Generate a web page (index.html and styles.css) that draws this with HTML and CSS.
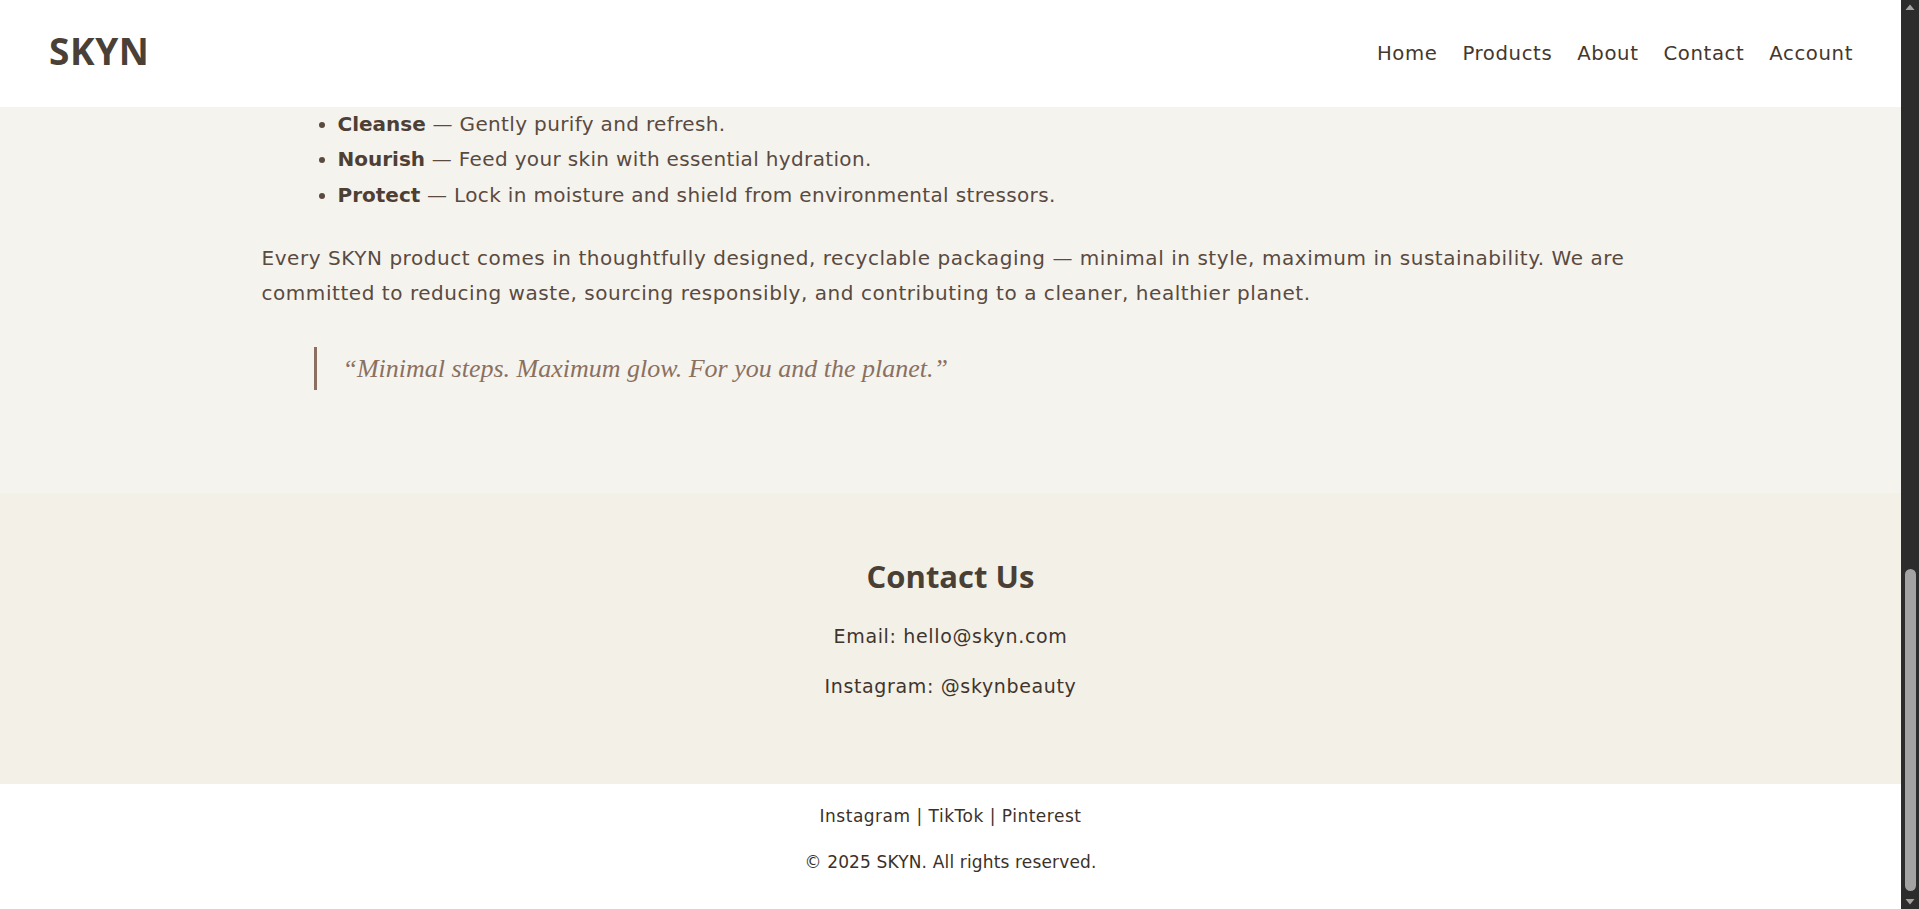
FILE: index.html
```html
<!DOCTYPE html>
<html lang="en">
<head>
<meta charset="utf-8">
<title>SKYN — Minimal Skincare</title>
<link rel="stylesheet" href="styles.css">
</head>
<body>
<div class="page">
  <header class="site-header">
    <div class="logo">SKYN</div>
    <nav class="nav">
      <a href="#home">Home</a>
      <a href="#products">Products</a>
      <a href="#about">About</a>
      <a href="#contact">Contact</a>
      <a href="#account">Account</a>
    </nav>
  </header>

  <main>
    <section class="about" id="about">
      <div class="container">
        <ul class="steps">
          <li><strong>Cleanse</strong> — Gently purify and refresh.</li>
          <li><strong>Nourish</strong> — Feed your skin with essential hydration.</li>
          <li><strong>Protect</strong> — Lock in moisture and shield from environmental stressors.</li>
        </ul>
        <p class="text">Every SKYN product comes in thoughtfully designed, recyclable packaging — minimal in style, maximum in sustainability. We are committed to reducing waste, sourcing responsibly, and contributing to a cleaner, healthier planet.</p>
        <blockquote class="quote">“Minimal steps. Maximum glow. For you and the planet.”</blockquote>
      </div>
    </section>

    <section class="contact" id="contact">
      <h2 class="contact-title">Contact Us</h2>
      <p class="contact-line">Email: hello@skyn.com</p>
      <p class="contact-line">Instagram: @skynbeauty</p>
    </section>
  </main>

  <footer class="site-footer">
    <p class="footer-line footer-links">Instagram | TikTok | Pinterest</p>
    <p class="footer-line">© 2025 SKYN. All rights reserved.</p>
  </footer>
</div>

<div class="scrollbar" aria-hidden="true">
  <svg class="sb-arrow" width="18" height="14" viewBox="0 0 18 14"><polygon points="4.5,10 13.5,10 9,4.5" fill="#a3a3a3"/></svg>
  <div class="sb-track">
    <div class="sb-thumb"></div>
  </div>
  <svg class="sb-arrow" width="18" height="14" viewBox="0 0 18 14"><polygon points="4.5,4 13.5,4 9,9.5" fill="#a3a3a3"/></svg>
</div>
</body>
</html>
```
FILE: styles.css
```css
html, body {
  margin: 0;
  height: 909px;
  overflow: hidden;
}

body {
  background: #ffffff;
  color: #5a4a40;
  font-family: "DejaVu Sans", "Noto Sans", sans-serif;
}

.page {
  margin-right: 18px;
  display: flex;
  flex-direction: column;
}

/* Header */
.site-header {
  height: 107px;
  box-sizing: border-box;
  padding: 0 48px 0 49px;
  display: flex;
  align-items: center;
  justify-content: space-between;
  background: #ffffff;
}

.logo {
  font-family: "Open Sans", sans-serif;
  font-weight: 700;
  font-size: 37px;
  letter-spacing: 0.6px;
  line-height: 1;
  margin-bottom: 6px;
  color: #4a4036;
}

.nav {
  display: flex;
  gap: 25px;
}

.nav a {
  font-size: 19.7px;
  letter-spacing: 0.6px;
  color: #45372d;
  text-decoration: none;
}

/* About (lower part of the section) */
.about {
  background: #f5f3ee;
  height: 386px;
  box-sizing: border-box;
}

.container {
  max-width: 1378px;
  margin: 0 auto;
}

.steps {
  margin: 0 0 27.5px;
  padding-left: 76px;
  font-size: 20px;
  line-height: 35.4px;
  letter-spacing: 0.35px;
}

.steps strong {
  color: #4e3f35;
  letter-spacing: 0;
}

.text {
  margin: 0 0 35px;
  font-size: 20px;
  line-height: 35.6px;
  letter-spacing: 0.55px;
}

.quote {
  margin: 0 0 0 52px;
  padding-left: 26px;
  border-left: 3px solid #8a7060;
  font-family: "Liberation Serif", serif;
  font-style: italic;
  font-size: 26px;
  line-height: 43.4px;
  color: #8a7060;
}

/* Contact */
.contact {
  background: #f3f0e8;
  height: 291px;
  box-sizing: border-box;
  padding-top: 65px;
  text-align: center;
}

.contact-title {
  margin: 0 0 25.6px;
  font-family: "Open Sans", sans-serif;
  font-weight: 700;
  font-size: 31px;
  line-height: 37.2px;
  color: #4a3f35;
}

.contact-line {
  margin: 0;
  font-size: 19px;
  line-height: 30.4px;
  letter-spacing: 0.65px;
  color: #3f352d;
}

.contact-line + .contact-line {
  margin-top: 19.6px;
}

/* Footer */
.site-footer {
  height: 125px;
  box-sizing: border-box;
  background: #ffffff;
  padding-top: 19px;
  display: flex;
  flex-direction: column;
  align-items: center;
  gap: 18.5px;
}

.footer-line {
  margin: 0;
  font-size: 17px;
  line-height: 27.2px;
  letter-spacing: 0.15px;
  color: #3b3129;
}

.footer-links {
  letter-spacing: 0.5px;
}

/* Window scrollbar (page scrolled to the bottom) */
.scrollbar {
  position: fixed;
  top: 0;
  right: 0;
  width: 18px;
  height: 909px;
  background: #2c2c2c;
  display: flex;
  flex-direction: column;
}

.sb-arrow {
  display: block;
  flex: none;
}

.sb-track {
  flex: 1;
  display: flex;
  flex-direction: column;
  justify-content: flex-end;
  padding-bottom: 4px;
}

.sb-thumb {
  height: 322px;
  margin: 0 3px 0 4px;
  border-radius: 6px;
  background: #a3a3a3;
}
```
